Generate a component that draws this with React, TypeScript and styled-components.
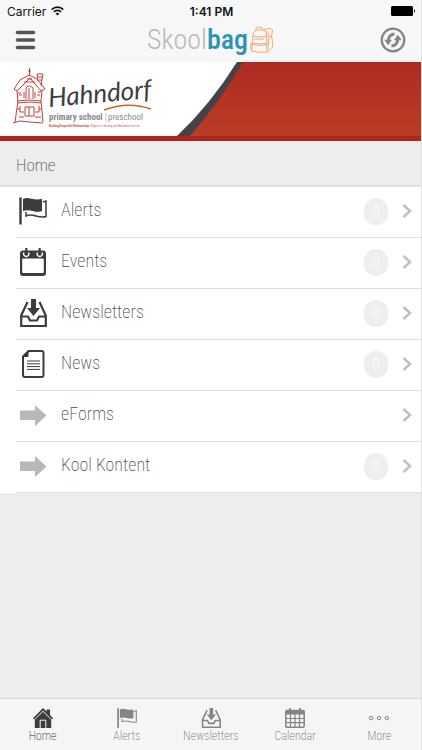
import React from "react";
import styled, { createGlobalStyle } from "styled-components";

const narrow = `"Roboto Condensed", "Liberation Sans Narrow", Roboto, sans-serif`;

const GlobalStyle = createGlobalStyle`
  * { box-sizing: border-box; }
  body { margin: 0; background: #ededed; font-family: ${narrow}; color: #4c4c4c; }
  button { font: inherit; color: inherit; border: 0; padding: 0; background: none; cursor: pointer; }
  svg { display: block; flex: none; }
`;

const Screen = styled.div`
  min-height: 100vh;
  display: flex;
  flex-direction: column;
  border-right: 1px solid #e2e2e2;
`;

const Top = styled.header`
  background: #f7f7f7;
  height: 62px;
`;

const StatusBar = styled.div`
  display: grid;
  grid-template-columns: 1fr auto 1fr;
  align-items: center;
  height: 22px;
  padding: 0 5px 0 7px;
  font: 12px Inter, sans-serif;
  color: #111;
`;

const Carrier = styled.div`
  display: flex;
  align-items: center;
  gap: 5px;
`;

const Clock = styled.div`
  font-weight: 600;
`;

const Battery = styled.div`
  justify-self: end;
`;

const NavBar = styled.div`
  display: grid;
  grid-template-columns: 1fr auto 1fr;
  align-items: center;
  height: 36px;
  padding: 0 15px;
`;

const IconButton = styled.button<{ $end?: boolean }>`
  justify-self: ${(p) => (p.$end ? "end" : "start")};
`;

const Logo = styled.div`
  display: flex;
  align-items: center;
  font: 300 28px/32px ${narrow};
  color: #b8b8b8;
`;

const LogoStrong = styled.span`
  margin-right: 2px;
  color: #2a93b5;
  font-weight: 500;
`;

const Banner = styled.section`
  position: relative;
  height: 79px;
  background: linear-gradient(#ae2a23, #ba3d25);
  border-bottom: 5px solid #ae261f;
`;

const Swoosh = styled.svg`
  position: absolute;
  left: 0;
  top: 0;
`;

const School = styled.div`
  position: relative;
  display: flex;
  padding: 5px 0 0 12px;
`;

const PageTitle = styled.h1`
  margin: 0;
  padding: 0 16px;
  height: 46px;
  border-bottom: 2px solid #e2e2e2;
  font-size: 17px;
  line-height: 48px;
  font-weight: 200;
`;

const List = styled.ul`
  margin: 0;
  padding: 0;
  list-style: none;
  background: #fff;
`;

const Row = styled.button`
  display: flex;
  align-items: center;
  width: calc(100% - 16px);
  height: 51px;
  margin-left: 16px;
  padding: 0 9px 2px 3px;
  border-bottom: 1px solid #dedede;
  text-align: left;
`;

const RowLabel = styled.span`
  flex: 1;
  padding: 0 0 2px 14px;
  font-size: 18px;
  line-height: 20px;
  font-weight: 200;
`;

const Badge = styled.span`
  display: grid;
  place-items: center;
  width: 24px;
  height: 27px;
  margin-right: 14px;
  border-radius: 13px;
  background: #eeeeee;
  color: #fafafa;
  font-size: 15px;
`;

const Tabs = styled.nav`
  display: grid;
  grid-template-columns: repeat(5, 1fr);
  height: 52px;
  margin-top: auto;
  background: #f5f5f5;
  border-top: 1px solid #d8d8d8;
`;

const Tab = styled.button<{ $active?: boolean }>`
  display: flex;
  flex-direction: column;
  align-items: center;
  gap: 1px;
  padding: 9px 0 0 1px;
  font-size: 12px;
  line-height: 14px;
  font-weight: 200;
  color: ${(p) => (p.$active ? "#333" : "#707070")};
`;

const dark = "#3c3c3e";
const grey = "#858585";

type IconProps = { size: number; color: string };

const Flag = ({ size, color }: IconProps) => (
  <svg width={size} height={size} viewBox="0 0 28 28" fill="none" stroke={color}>
    <path d="M1.500 0.500V27.500" strokeWidth="2.400" />
    <path d="M4 2C9-1 14 4 23 2V14C16 17 12 11 4 14Z" fill={color} stroke="none" />
    <path d="M7 15V19C14 15.500 19 22 27 19.500V4L24 5" strokeWidth="1.500" />
  </svg>
);

const Calendar = ({ size, color }: IconProps) => (
  <svg width={size} height={size} viewBox="0 0 28 28" fill="none">
    <rect x="1" y="2.500" width="26" height="25.500" rx="3" fill={color} />
    <rect x="3.200" y="10.500" width="21.600" height="14.500" rx="1" fill="#fff" />
    <path d="M5 4.500a2.600 2.600 0 1 0 4.500 0M18.500 4.500a2.600 2.600 0 1 0 4.500 0" stroke="#fff" strokeWidth="1.400" />
    <path d="M7.300 0V6M20.700 0V6" stroke={color} strokeWidth="2.200" />
  </svg>
);

const Inbox = ({ size, color }: IconProps) => (
  <svg width={size} height={size} viewBox="0 0 28 28" fill="none" stroke={color} strokeWidth="2.200">
    <path d="M8.500 3L2.200 16.500V27H26.800V16.500L20.500 3M2.200 17.500H9L11 21.500H18L20 17.500H26.800" />
    <path d="M12 0H17V9H21L14.500 17L8 9H12Z" fill={color} stroke="none" />
  </svg>
);

const Page = ({ size, color }: IconProps) => (
  <svg width={size} height={size} viewBox="0 0 28 28" fill="none" stroke={color}>
    <path d="M9.500 1H22.500Q24.500 1 24.500 3V25Q24.500 27 22.500 27H6Q4 27 4 25V6.500Z" strokeWidth="2" />
    <path d="M9 1V6.500H4Z" fill={color} />
    <path d="M8 11H21M8 13.800H21M8 16.600H21M8 19.400H21" strokeWidth="1" />
  </svg>
);

const Arrow = ({ size, color }: IconProps) => (
  <svg width={size} height={size} viewBox="0 0 28 28">
    <path d="M1 9.500H16V4L27.500 14.500L16 25V19H1Z" fill={color} />
  </svg>
);

const House = ({ size, color }: IconProps) => (
  <svg width={size} height={size} viewBox="0 0 20 20" fill={color}>
    <path d="M0 10.200L10 0L13.500 3.500V1.500H17V7L20 10.200L18.800 11.400L10 2.700L1.200 11.400Z" />
    <path d="M10 3.700L18.200 11.800V20H1.800V11.800Z" />
    <path d="M7.200 20V12.200H12.800V20" fill="none" stroke="#f5f5f5" strokeWidth="1" />
  </svg>
);

const Grid = ({ size, color }: IconProps) => (
  <svg width={size} height={size} viewBox="0 0 20 20" fill="none" stroke={color}>
    <path d="M1 2.500H19V6H1Z" fill={color} />
    <rect x="0.800" y="2.500" width="18.400" height="16.800" rx="1.500" strokeWidth="1.500" />
    <path d="M1 10.500H19M1 14.700H19M5.500 6V19M10 6V19M14.500 6V19" strokeWidth="1.200" />
    <path d="M5 0V3M15 0V3" strokeWidth="1.800" />
  </svg>
);

const Dots = ({ size, color }: IconProps) => (
  <svg width={size} height={size} viewBox="0 0 20 20" fill="none" stroke={color} strokeWidth="1">
    <circle cx="2.200" cy="10" r="1.700" />
    <circle cx="10" cy="10" r="1.700" />
    <circle cx="17.800" cy="10" r="1.700" />
  </svg>
);

const Chevron = () => (
  <svg width="10" height="14" viewBox="0 0 10 14" fill="none" stroke="#bebebe" strokeWidth="2.400">
    <path d="M1.500 1L8 7L1.500 13" />
  </svg>
);

const Wifi = () => (
  <svg width="13" height="10" viewBox="0 0 13 10" fill="none" stroke="#111" strokeWidth="1.700">
    <path d="M0.700 3.600C4 0.200 9 0.200 12.300 3.600M2.900 5.900C5 3.800 8 3.800 10.100 5.900" />
    <path d="M4.500 7.500Q6.500 5.900 8.500 7.500L6.500 9.600Z" fill="#111" stroke="none" />
  </svg>
);

const BatteryIcon = () => (
  <svg width="25" height="10" viewBox="0 0 25 10">
    <rect width="22" height="10" rx="1.500" />
    <path d="M23 3Q25 5 23 7Z" />
  </svg>
);

const Menu = () => (
  <svg width="21" height="20" viewBox="0 0 21 20" stroke="#555" strokeWidth="3.600" strokeLinecap="round">
    <path d="M2.500 2.500H18.500M2.500 10H18.500M2.500 17.500H18.500" />
  </svg>
);

const Refresh = () => (
  <svg width="26" height="26" viewBox="0 0 26 26" fill="none" stroke="#858585">
    <circle cx="13" cy="13" r="11.300" strokeWidth="2.300" />
    <path d="M14.500 7Q8.500 7.500 8.200 14M11.500 19Q17.500 18.500 17.800 12" strokeWidth="3" />
    <path d="M4.300 12.800H12L8.200 18.300ZM21.700 13.200H14L17.800 7.700Z" fill="#858585" stroke="none" />
  </svg>
);

const Backpack = () => (
  <svg width="24" height="28" viewBox="0 0 24 28" fill="none" stroke="#eea264" strokeWidth="0.900">
    <path d="M3 9Q4 4 8 4H12Q16 4 16.500 9L17 26Q9 27 1.500 25Z" />
    <path d="M5.500 4Q6 1 9.500 1Q13 1 13 4M14 4Q21 1 22.500 4L21.500 11Q23.500 15 22.500 21L17 26M17 5L19 10L18 23M3 10Q9 12 16.500 10M2 17Q9 19 17 17M2 18.500Q9 20.500 17 18.500M1 17Q0 22 1.500 25M4 13H14M19 10L21.500 11" />
  </svg>
);

const SchoolLogo = () => (
  <svg width="142" height="64" viewBox="12 67 142 64" fill="none" role="img" aria-label="Hahndorf primary school, preschool">
    <g stroke="#c34137" strokeWidth="1">
      <path d="M14 89L20 80L29 75L37 79L45 89L41 91L30 78L17 91ZM29.500 76V68M28 71H31M38 81L37 74H43L41 86M38 77H42M39 80H42" />
      <path d="M17 91L18 101L15 122M42 90L41 101L43 122M17 101Q29 99 41 101M18 103Q29 101 41 103M13 123L20 121L29 122L43 123M27 79H32M24 82H35" />
      <path d="M26 99V88Q29 84 33 88V99M29 88V99M24 92V98M35 92V98M19 95H22M37 95H40M25 116V107H34V116ZM29 107V116M20 106V112H24M35 112H39V106M19 117H24M35 117H41M18 93H21M38 92H41M17 109H20M39 109H42" />
    </g>
    <path d="M104 110Q128 101 151 109" stroke="#d85b2b" strokeWidth="1.400" />
    <text transform="translate(49 107) rotate(-5)" fontFamily="Lato, sans-serif" fontStyle="italic" fontSize="26" fill="#3d3d40">Hahndorf</text>
    <text x="49" y="120" fontFamily="Roboto Condensed, sans-serif" fontWeight="700" fontSize="9" fill="#8b8b8b">primary school</text>
    <path d="M106 113V122" stroke="#aaa" strokeWidth="0.600" />
    <text x="108" y="120" fontFamily="Roboto Condensed, sans-serif" fontSize="9" fill="#8b8b8b">preschool</text>
    <text x="49" y="127" fontFamily="Roboto Condensed, sans-serif" fontSize="3" fill="#c05b55">
      <tspan fontWeight="700">Building Respectful Relationships.</tspan> Rigour in Learning and Resilience for Life
    </text>
  </svg>
);

const rows = [
  { label: "Alerts", Icon: Flag, color: dark, count: 0 },
  { label: "Events", Icon: Calendar, color: dark, count: 0 },
  { label: "Newsletters", Icon: Inbox, color: dark, count: 0 },
  { label: "News", Icon: Page, color: dark, count: 0 },
  { label: "eForms", Icon: Arrow, color: "#b8b8b8" },
  { label: "Kool Kontent", Icon: Arrow, color: "#b8b8b8", count: 0 },
];

const tabs = [
  { label: "Home", Icon: House },
  { label: "Alerts", Icon: Flag },
  { label: "Newsletters", Icon: Inbox },
  { label: "Calendar", Icon: Grid },
  { label: "More", Icon: Dots },
];

export default function App() {
  return (
    <>
      <GlobalStyle />
      <Screen>
        <Top>
          <StatusBar>
            <Carrier>Carrier <Wifi /></Carrier>
            <Clock>1:41 PM</Clock>
            <Battery><BatteryIcon /></Battery>
          </StatusBar>
          <NavBar>
            <IconButton aria-label="Menu"><Menu /></IconButton>
            <Logo><span>Skool</span><LogoStrong>bag</LogoStrong><Backpack /></Logo>
            <IconButton $end aria-label="Refresh"><Refresh /></IconButton>
          </NavBar>
        </Top>
        <Banner>
          <Swoosh width="243" height="74" viewBox="0 0 243 74">
            <path d="M0 0H243Q219 41 190 74H0Z" fill="#454347" />
            <path d="M0 0H237Q210 43 177 74H0Z" fill="#fff" />
          </Swoosh>
          <School><SchoolLogo /></School>
        </Banner>
        <PageTitle>Home</PageTitle>
        <List>
          {rows.map(({ label, Icon, color, count }) => (
            <li key={label}>
              <Row>
                <Icon size={28} color={color} />
                <RowLabel>{label}</RowLabel>
                {count !== undefined && <Badge>{count}</Badge>}
                <Chevron />
              </Row>
            </li>
          ))}
        </List>
        <Tabs>
          {tabs.map(({ label, Icon }, i) => (
            <Tab key={label} $active={i === 0} aria-current={i === 0 ? "page" : undefined}>
              <Icon size={20} color={i === 0 ? dark : grey} />
              {label}
            </Tab>
          ))}
        </Tabs>
      </Screen>
    </>
  );
}
